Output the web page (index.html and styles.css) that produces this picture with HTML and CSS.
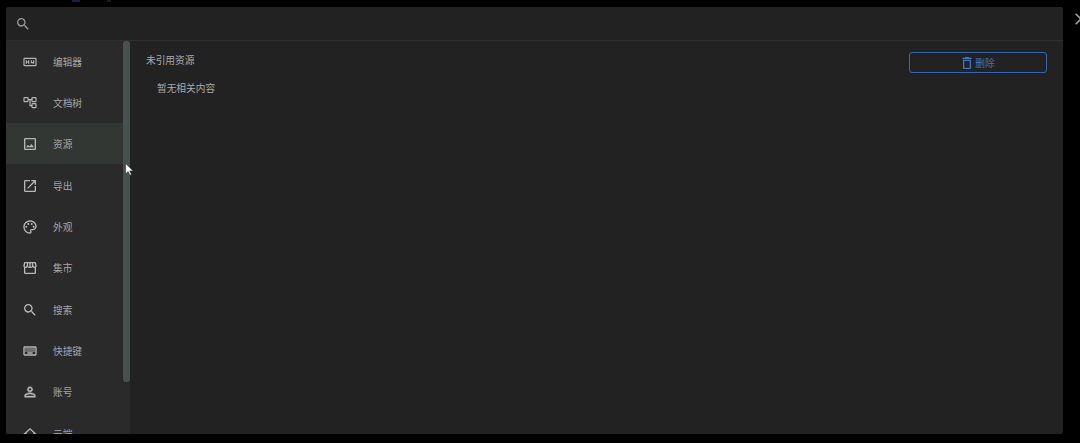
FILE: index.html
```html
<!DOCTYPE html>
<html lang="zh-CN">
<head>
  <meta charset="UTF-8" />
  <title>设置</title>
  <link rel="stylesheet" href="styles.css">
</head>
<body>
  <div class="backdrop-bits">
    <span class="bit bit-a"></span>
    <span class="bit bit-b"></span>
  </div>

  <div class="dialog">
    <div class="search-bar">
      <svg class="icon" viewBox="0 0 24 24"><path d="M15.5 14h-.79l-.28-.27A6.471 6.471 0 0 0 16 9.5 6.5 6.5 0 1 0 9.5 16c1.61 0 3.09-.59 4.23-1.57l.27.28v.79l5 4.99L20.49 19l-4.99-5zm-6 0C7.01 14 5 11.99 5 9.5S7.01 5 9.5 5 14 7.01 14 9.5 11.99 14 9.5 14z"/></svg>
    </div>

    <div class="dialog-body">
      <div class="sidebar">
        <div class="nav-list">
          <div class="nav-item">
            <svg class="icon line" viewBox="0 0 24 24"><rect x="3" y="6.500" width="18" height="11" rx="1"/><path d="M6.500 9.500v5M10 9.500v5M6.500 12H10M14 9.500V13h3.500M17.500 9.500v5"/></svg>
            <span>编辑器</span>
          </div>
          <div class="nav-item">
            <svg class="icon line" viewBox="0 0 24 24"><rect x="3" y="4" width="6" height="6" rx="1"/><rect x="15" y="4" width="6" height="6" rx="1"/><rect x="15" y="13" width="6" height="6" rx="1"/><path d="M9 7h6M12 7v9h3"/></svg>
            <span>文档树</span>
          </div>
          <div class="nav-item active">
            <svg class="icon" viewBox="0 0 24 24"><path d="M19 5v14H5V5h14m0-2H5c-1.100 0-2 .9-2 2v14c0 1.100.9 2 2 2h14c1.100 0 2-.9 2-2V5c0-1.100-.9-2-2-2zm-4.860 8.860l-3 3.870L9 13.140 6 17h12l-3.860-5.140z"/></svg>
            <span>资源</span>
          </div>
          <div class="nav-item">
            <svg class="icon" viewBox="0 0 24 24"><path d="M19 19H5V5h7V3H5a2 2 0 0 0-2 2v14a2 2 0 0 0 2 2h14c1.100 0 2-.9 2-2v-7h-2v7zM14 3v2h3.590l-9.830 9.830 1.410 1.410L19 6.410V10h2V3h-7z"/></svg>
            <span>导出</span>
          </div>
          <div class="nav-item">
            <svg class="icon" viewBox="0 0 24 24"><path d="M12 22C6.490 22 2 17.510 2 12S6.490 2 12 2s10 4.040 10 9c0 3.310-2.690 6-6 6h-1.770c-.28 0-.5.220-.5.500 0 .120.050.230.130.330.410.470.640 1.060.640 1.670A2.500 2.500 0 0 1 12 22zm0-18c-4.410 0-8 3.590-8 8s3.590 8 8 8c.280 0 .500-.220.500-.500a.54.54 0 0 0-.140-.350c-.410-.460-.630-1.050-.630-1.650a2.500 2.500 0 0 1 2.500-2.500H16c2.210 0 4-1.790 4-4 0-3.860-3.590-7-8-7z"/><circle cx="6.500" cy="11.500" r="1.500"/><circle cx="9.500" cy="7.500" r="1.500"/><circle cx="14.500" cy="7.500" r="1.500"/><circle cx="17.500" cy="11.500" r="1.500"/></svg>
            <span>外观</span>
          </div>
          <div class="nav-item">
            <svg class="icon" viewBox="0 0 24 24"><path fill-rule="evenodd" d="M4.500 3h15A1.500 1.500 0 0 1 21 4.300l1 4.200c0 1.100-.4 2-1 2.600V19a2 2 0 0 1-2 2H5a2 2 0 0 1-2-2v-7.900c-.6-.6-1-1.500-1-2.600l1-4.200A1.500 1.500 0 0 1 4.500 3zM5 12v7h14v-7c-1.200 0-2.200-.4-3-1.200-.8.8-2.200 1.200-4 1.200s-3.200-.4-4-1.200C7.200 11.600 6.200 12 5 12zM5 5l-.9 3.500C4.100 9.400 4.500 10 5.300 10 6.200 10 7 9.300 7 8.400L7.300 5H5zm4.300 0L9 8.500c0 .9 1.100 1.500 2 1.500V5H9.300zM13 5v5c.9 0 2-.6 2-1.500L14.700 5H13zm3.700 0l.3 3.400c0 .9.8 1.600 1.700 1.600.8 0 1.200-.6 1.200-1.500L19 5h-2.300z"/></svg>
            <span>集市</span>
          </div>
          <div class="nav-item">
            <svg class="icon" viewBox="0 0 24 24"><path d="M15.500 14h-.79l-.28-.27A6.471 6.471 0 0 0 16 9.500 6.500 6.500 0 1 0 9.500 16c1.610 0 3.090-.59 4.230-1.570l.27.28v.79l5 4.990L20.490 19l-4.990-5zm-6 0C7.010 14 5 11.990 5 9.500S7.010 5 9.500 5 14 7.010 14 9.500 11.990 14 9.500 14z"/></svg>
            <span>搜索</span>
          </div>
          <div class="nav-item">
            <svg class="icon" viewBox="0 0 24 24"><path d="M20 7v10H4V7h16m0-2H4c-1.100 0-1.990.9-1.990 2L2 17c0 1.100.9 2 2 2h16c1.100 0 2-.9 2-2V7c0-1.100-.9-2-2-2zm-9 3h2v2h-2zm0 3h2v2h-2zM8 8h2v2H8zm0 3h2v2H8zm-3 0h2v2H5zm0-3h2v2H5zm3 6h8v2H8zm6-3h2v2h-2zm0-3h2v2h-2zm3 3h2v2h-2zm0-3h2v2h-2z"/></svg>
            <span>快捷键</span>
          </div>
          <div class="nav-item">
            <svg class="icon heavy" viewBox="0 0 24 24"><path d="M12 5.900a2.100 2.100 0 1 1 0 4.200 2.100 2.100 0 0 1 0-4.200m0 9c2.970 0 6.100 1.460 6.100 2.100v1.100H5.900V17c0-.64 3.130-2.100 6.100-2.100M12 4C9.790 4 8 5.790 8 8s1.790 4 4 4 4-1.790 4-4-1.790-4-4-4zm0 9c-2.670 0-8 1.340-8 4v3h16v-3c0-2.660-5.330-4-8-4z"/></svg>
            <span>账号</span>
          </div>
          <div class="nav-item">
            <svg class="icon" viewBox="0 0 24 24"><path d="M12 5.690l5 4.500V18h-2v-6H9v6H7v-7.810l5-4.500M12 3L2 12h3v8h6v-6h2v6h6v-8h3L12 3z"/></svg>
            <span>云端</span>
          </div>
        </div>
        <div class="scroll-track"><div class="scroll-thumb"></div></div>
      </div>

      <div class="content">
        <div class="content-head">
          <div class="content-title">未引用资源</div>
          <button class="delete-btn">
            <svg class="icon" viewBox="0 0 24 24"><path d="M16 9v10H8V9h8m-1.500-6h-5l-1 1H5v2h14V4h-3.500l-1-1zM18 7H6v12c0 1.100.9 2 2 2h8c1.100 0 2-.9 2-2V7z"/></svg>
            <span>删除</span>
          </button>
        </div>
        <div class="empty-text">暂无相关内容</div>
      </div>
    </div>
  </div>

  <svg class="close-x" viewBox="0 0 12 16"><path d="M1 2l6 6-6 6"/><path d="M13 2L7 8l6 6"/></svg>

  <svg class="cursor" viewBox="0 0 10 16"><path d="M0.500 0.500v12l3-2.800 2 4.300 1.800-.8-2-4.200h3.900z"/></svg>
</body>
</html>
```

FILE: styles.css
```css
html, body {
  margin: 0;
  height: 100%;
}

body {
  background: #000;
  font-family: "Noto Sans CJK SC", "Noto Sans", sans-serif;
  overflow: hidden;
  padding: 7px 17px 0 6px;
  box-sizing: border-box;
}

.icon {
  width: 16px;
  height: 16px;
  flex-shrink: 0;
  fill: currentColor;
}

.icon.line {
  fill: none;
  stroke: currentColor;
  stroke-width: 1.700;
}

.icon.heavy {
  stroke: currentColor;
  stroke-width: 0.700;
}

.dialog {
  height: 427px;
  background: #222;
  border-radius: 2px;
  display: flex;
  flex-direction: column;
  overflow: hidden;
}

.search-bar {
  box-sizing: border-box;
  height: 34px;
  padding: 0 8px 0 9px;
  display: flex;
  align-items: center;
  color: #9a9a9a;
  border-bottom: 1px solid #2f2f2f;
  flex-shrink: 0;
}

.dialog-body {
  flex: 1;
  display: flex;
  min-height: 0;
}

/* sidebar */
.sidebar {
  width: 124px;
  background: #2a2a2a;
  display: flex;
  flex-shrink: 0;
  overflow: hidden;
}

.nav-list {
  width: 117px;
  flex-shrink: 0;
  margin-top: -1px;
}

.nav-item {
  box-sizing: border-box;
  height: 41.33px;
  padding: 2px 0 0 16px;
  display: flex;
  align-items: center;
  gap: 15px;
  color: #a3a6a8;
  font-size: 9.7px;
}

.nav-item .icon {
  color: #b4b7b9;
}

.nav-item.active {
  background: #323733;
}

.scroll-track {
  width: 7px;
}

.scroll-thumb {
  height: 341px;
  background: #465250;
  border-radius: 3px;
}

/* content */
.content {
  flex: 1;
  padding: 11px 16px 0;
  color: #a9a9a9;
  font-size: 9.7px;
}

.content-head {
  display: flex;
  justify-content: space-between;
  align-items: flex-start;
}

.content-title {
  line-height: 16px;
}

.delete-btn {
  width: 138px;
  height: 21px;
  background: transparent;
  border: 1px solid #3568b0;
  border-radius: 3px;
  color: #3f74c4;
  font: inherit;
  display: flex;
  align-items: center;
  justify-content: center;
  padding: 0 2px 0 0;
}

.empty-text {
  padding-left: 11px;
  margin-top: 7px;
  line-height: 16px;
}

/* stuff sitting over the page */
.close-x {
  position: absolute;
  left: 1074px;
  top: 12px;
  width: 12px;
  height: 14px;
  fill: none;
  stroke: #a0a0a0;
  stroke-width: 2;
}

.cursor {
  position: absolute;
  left: 125px;
  top: 163px;
  width: 9px;
  height: 14px;
  fill: #fff;
  stroke: #222;
  stroke-width: 0.6;
}

.bit {
  position: absolute;
  top: 0;
  height: 2px;
}

.bit-a {
  left: 72px;
  width: 8px;
  background: #15233a;
}

.bit-b {
  left: 107px;
  width: 4px;
  background: #1c1c1c;
}
```
